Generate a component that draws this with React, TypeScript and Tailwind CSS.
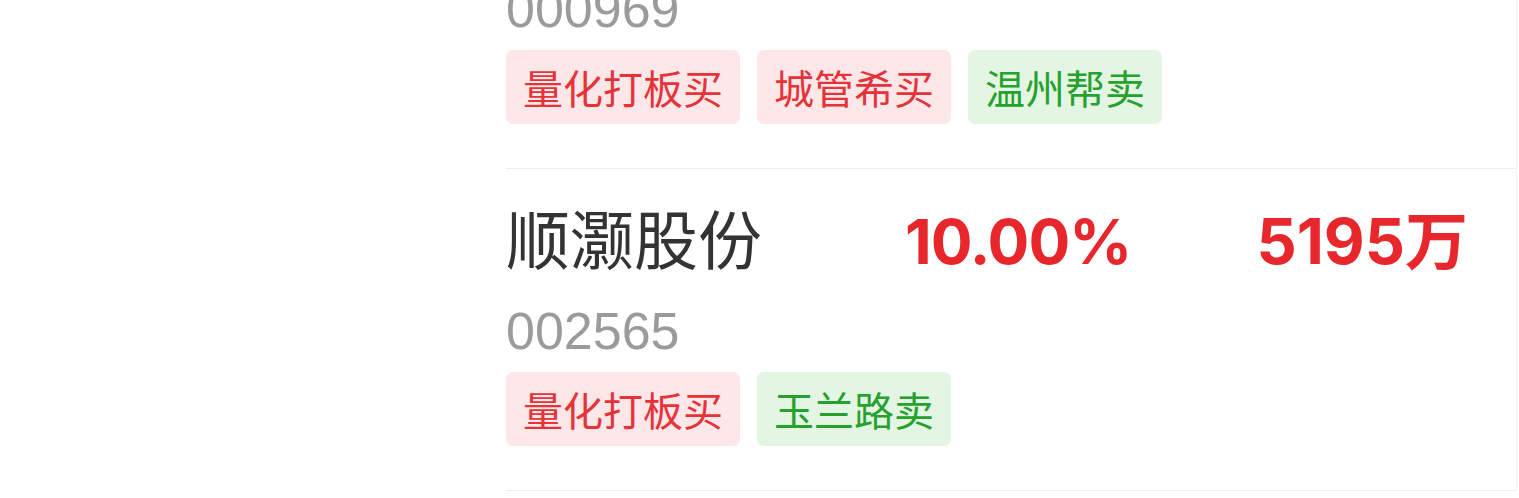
import React from "react";

type Tag = { label: string; side: "buy" | "sell" };

type Stock = {
  name: string;
  code: string;
  pct: string;
  amount: string;
  tags: Tag[];
};

const stocks: Stock[] = [
  {
    name: "安泰科技",
    code: "000969",
    pct: "10.02%",
    amount: "3862万",
    tags: [
      { label: "量化打板买", side: "buy" },
      { label: "城管希买", side: "buy" },
      { label: "温州帮卖", side: "sell" },
    ],
  },
  {
    name: "顺灏股份",
    code: "002565",
    pct: "10.00%",
    amount: "5195万",
    tags: [
      { label: "量化打板买", side: "buy" },
      { label: "玉兰路卖", side: "sell" },
    ],
  },
];

const cjk = { fontFamily: '"Noto Sans CJK SC", sans-serif' };
const num = { fontFamily: 'Inter, "Noto Sans CJK SC", sans-serif' };
const code = { fontFamily: '"Liberation Sans", sans-serif' };

const StockRow = ({ stock }: { stock: Stock }) => (
  <div className="pt-[35px] pb-[44px] border-b border-[#eeeeee]">
    <div className="h-[63px] flex items-baseline pr-[48px]">
      <div className="w-[399px] text-[64px] leading-none text-[#333333]" style={cjk}>
        {stock.name}
      </div>
      <div className="w-[300px] text-[62px] leading-none font-bold text-[#e8272c] tracking-[-1px]" style={num}>
        {stock.pct}
      </div>
      <div className="flex-1 text-right text-[63px] leading-none font-bold text-[#e8272c]" style={num}>
        {stock.amount}
      </div>
    </div>
    <div className="mt-[38px] text-[52px] leading-none text-[#9b9b9b]" style={code}>
      {stock.code}
    </div>
    <div className="mt-[15px] flex gap-[17px]">
      {stock.tags.map((tag) => (
        <span
          key={tag.label}
          className={
            tag.side === "buy"
              ? "h-[74px] px-[17px] flex items-center rounded-[7px] text-[40px] leading-none bg-[#fde7e8] text-[#e5333a]"
              : "h-[74px] px-[17px] flex items-center rounded-[7px] text-[40px] leading-none bg-[#e3f5e3] text-[#26a12d]"
          }
          style={cjk}
        >
          {tag.label}
        </span>
      ))}
    </div>
  </div>
);

export default function App() {
  return (
    <div className="w-[1519px] h-[498px] overflow-hidden bg-white">
      <div className="ml-[506px] mr-[2px] -mt-[153px] border-r border-[#f3f3f3]">
        {stocks.map((s) => (
          <StockRow key={s.code} stock={s} />
        ))}
      </div>
    </div>
  );
}
